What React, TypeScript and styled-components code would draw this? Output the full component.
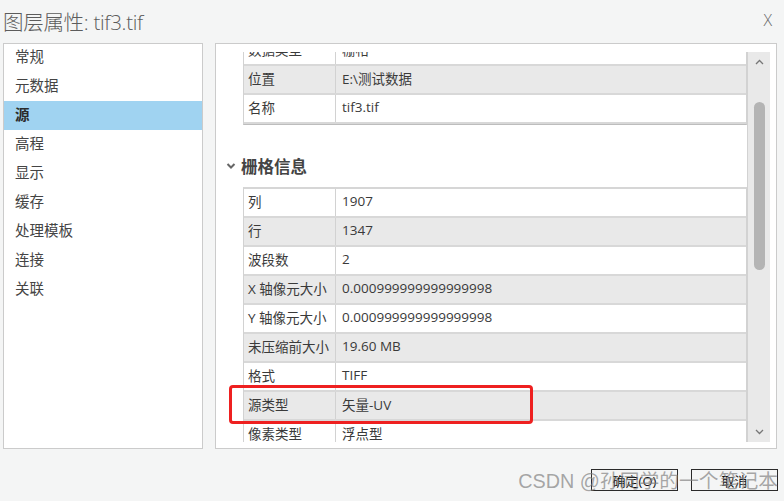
import React, { useLayoutEffect, useRef } from "react";
import styled, { createGlobalStyle } from "styled-components";

const GlobalStyle = createGlobalStyle`
  html, body {
    margin: 0;
    padding: 0;
    background: #f4f5f5;
  }
  * {
    box-sizing: border-box;
  }
`;

const FONT = `"Open Sans", "Noto Sans CJK SC", sans-serif`;

const Dialog = styled.div`
  position: relative;
  width: 784px;
  height: 501px;
  display: flex;
  flex-direction: column;
  background: #f4f5f5;
  font-family: ${FONT};
  color: #333;
  overflow: hidden;
`;

const TitleBar = styled.div`
  height: 43px;
  display: flex;
  align-items: center;
  justify-content: space-between;
  padding: 0 12px 0 3px;
`;

const Title = styled.div`
  font-size: 20.5px;
  font-weight: 300;
  color: #5c5c5c;
  letter-spacing: -0.3px;
  margin-top: -1px;
`;

const Close = styled.div`
  font-size: 16px;
  font-weight: 300;
  color: #6a6a6a;
  margin-top: -4px;
`;

const Body = styled.div`
  height: 406px;
  display: flex;
  gap: 12px;
  padding: 0 7px 0 3px;
`;

const Nav = styled.div`
  width: 200px;
  background: #fff;
  border: 1px solid #cbcbcb;
  display: flex;
  flex-direction: column;
`;

const NavItem = styled.div<{ $active?: boolean }>`
  height: 29px;
  display: flex;
  align-items: center;
  padding: 0 0 4px 11px;
  font-size: 14.5px;
  color: ${(p) => (p.$active ? "#2b2b2b" : "#444")};
  background: ${(p) => (p.$active ? "#a0d3f1" : "transparent")};
  font-weight: ${(p) => (p.$active ? 600 : 400)};
  &:first-child {
    margin-top: -1px;
  }
`;

const Panel = styled.div`
  flex: 1;
  background: #fff;
  border: 1px solid #cbcbcb;
  padding: 8px 6px 6px 0;
  display: flex;
`;

const Scroller = styled.div`
  flex: 1;
  overflow: hidden;
  padding-left: 10px;
`;

const SectionHeader = styled.div`
  height: 24px;
  margin: 29px 0 9px;
  display: flex;
  align-items: center;
  gap: 5px;
  font-size: 16.5px;
  font-weight: 700;
  color: #444;
`;

const Table = styled.div<{ $closed?: boolean }>`
  margin-left: 17px;
  border-top: 2px solid #d6d6d6;
  border-left: 1px solid #d2d2d2;
  border-right: 1px solid #d2d2d2;
  border-bottom: ${(p) => (p.$closed ? "1px solid #bdbdbd" : "none")};
`;

const Row = styled.div<{ $shade?: boolean }>`
  position: relative;
  display: grid;
  grid-template-columns: 92px 1fr;
  height: 29px;
  border-bottom: 2px solid #d8d8d8;
  background: ${(p) => (p.$shade ? "#e9e9e9" : "#fff")};
`;

const Label = styled.div`
  display: flex;
  align-items: center;
  padding: 0 0 3px 4px;
  font-size: 13.5px;
  color: #3a3a3a;
  border-right: 1px solid #d2d2d2;
  white-space: nowrap;
  overflow: hidden;
`;

const Value = styled.div`
  display: flex;
  align-items: center;
  padding: 0 0 3px 6px;
  font-size: 13.5px;
  color: #3a3a3a;
  white-space: nowrap;
`;

const Highlight = styled.div`
  position: absolute;
  z-index: 2;
  left: -15px;
  top: -7px;
  width: 304px;
  height: 39px;
  border: 3px solid #ee2020;
  border-radius: 4px;
  pointer-events: none;
`;

const ScrollBar = styled.div`
  width: 23px;
  background: #e9e9e9;
  border-left: 1px solid #d2d2d2;
  display: flex;
  flex-direction: column;
  align-items: center;
`;

const ArrowBox = styled.div`
  height: 20px;
  display: flex;
  align-items: center;
  justify-content: center;
`;

const Track = styled.div`
  flex: 1;
  width: 100%;
  display: flex;
  justify-content: center;
  padding-top: 30px;
`;

const Thumb = styled.div`
  width: 11px;
  height: 168px;
  border-radius: 6px;
  background: #b4b4b4;
`;

const Footer = styled.div`
  flex: 1;
  display: flex;
  justify-content: flex-end;
  align-items: flex-start;
  gap: 13px;
  padding: 20px 6px 0 0;
`;

const Button = styled.div`
  width: 87px;
  height: 22px;
  border: 1px solid #2a2a2a;
  display: flex;
  align-items: center;
  justify-content: center;
  font-size: 13px;
  color: #111;
`;

const Watermark = styled.div`
  position: absolute;
  right: 6px;
  bottom: 7px;
  font-size: 19.8px;
  color: rgba(130, 130, 130, 0.7);
  font-family: "Liberation Sans", "Noto Sans CJK SC", sans-serif;
  pointer-events: none;
  white-space: nowrap;
`;

const Chevron = ({ up }: { up?: boolean }) => (
  <svg width="9" height="6" viewBox="0 0 9 6">
    <path
      d={up ? "M1 5 L4.5 1.5 L8 5" : "M1 1 L4.5 4.5 L8 1"}
      fill="none"
      stroke="#777"
      strokeWidth="1.3"
    />
  </svg>
);

const HeaderChevron = () => (
  <svg width="10" height="8" viewBox="0 0 10 8">
    <path d="M1.5 2 L5 5.5 L8.5 2" fill="none" stroke="#666" strokeWidth="2" />
  </svg>
);

const navItems = ["常规", "元数据", "源", "高程", "显示", "缓存", "处理模板", "连接", "关联"];

const sourceRows: [string, string][] = [
  ["数据类型", "栅格"],
  ["位置", "E:\\测试数据"],
  ["名称", "tif3.tif"],
];

const rasterRows: [string, string][] = [
  ["列", "1907"],
  ["行", "1347"],
  ["波段数", "2"],
  ["X 轴像元大小", "0.000999999999999998"],
  ["Y 轴像元大小", "0.000999999999999998"],
  ["未压缩前大小", "19.60 MB"],
  ["格式", "TIFF"],
  ["源类型", "矢量-UV"],
  ["像素类型", "浮点型"],
  ["像素深度", "32 Bit"],
  ["无数据值", ""],
  ["色彩映射表", "不存在"],
  ["金字塔", "级别: 4, 重采样: 最邻近"],
  ["压缩", "LZW"],
];

export default function App() {
  const scrollRef = useRef<HTMLDivElement>(null);

  useLayoutEffect(() => {
    if (scrollRef.current) scrollRef.current.scrollTop = 79;
  }, []);

  return (
    <Dialog>
      <GlobalStyle />
      <TitleBar>
        <Title>图层属性: tif3.tif</Title>
        <Close>X</Close>
      </TitleBar>
      <Body>
        <Nav>
          {navItems.map((n) => (
            <NavItem key={n} $active={n === "源"}>
              {n}
            </NavItem>
          ))}
        </Nav>
        <Panel>
          <Scroller ref={scrollRef}>
            <SectionHeader>
              <HeaderChevron />
              数据源
            </SectionHeader>
            <Table $closed>
              {sourceRows.map(([k, v], i) => (
                <Row key={k} $shade={i % 2 === 1}>
                  <Label>{k}</Label>
                  <Value>{v}</Value>
                </Row>
              ))}
            </Table>
            <SectionHeader>
              <HeaderChevron />
              栅格信息
            </SectionHeader>
            <Table>
              {rasterRows.map(([k, v], i) => (
                <Row key={k} $shade={i % 2 === 1}>
                  <Label>{k}</Label>
                  <Value>{v}</Value>
                  {k === "源类型" && <Highlight />}
                </Row>
              ))}
            </Table>
          </Scroller>
          <ScrollBar>
            <ArrowBox>
              <Chevron up />
            </ArrowBox>
            <Track>
              <Thumb />
            </Track>
            <ArrowBox>
              <Chevron />
            </ArrowBox>
          </ScrollBar>
        </Panel>
      </Body>
      <Footer>
        <Button>确定(O)</Button>
        <Button>取消</Button>
      </Footer>
      <Watermark>CSDN @孙同学的一个笔记本</Watermark>
    </Dialog>
  );
}
